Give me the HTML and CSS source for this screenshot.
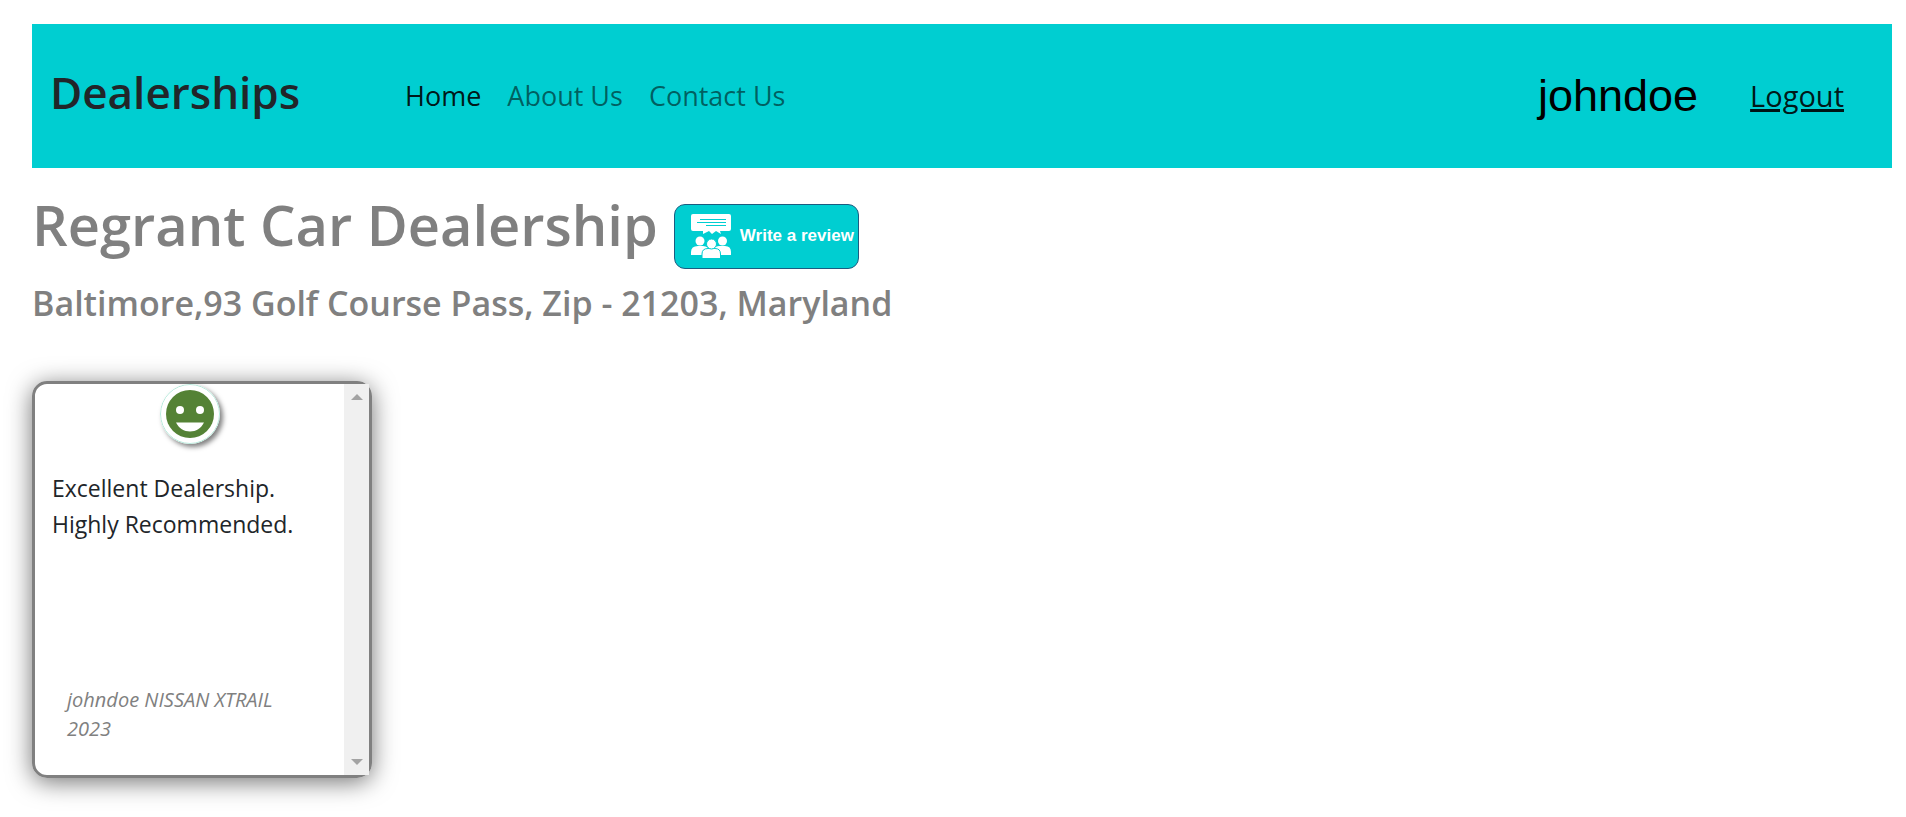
FILE: index.html
```html
<!DOCTYPE html>
<html lang="en">
<head>
<meta charset="utf-8">
<meta name="viewport" content="width=device-width, initial-scale=1">
<title>Dealerships</title>
<link rel="stylesheet" href="styles.css">
</head>
<body>
<header class="navbar">
  <h2 class="brand">Dealerships</h2>
  <nav class="menu">
    <a class="menu-link active" href="#">Home</a>
    <a class="menu-link" href="#">About Us</a>
    <a class="menu-link" href="#">Contact Us</a>
  </nav>
  <div class="account">
    <span class="username">johndoe</span>
    <a class="logout" href="#">Logout</a>
  </div>
</header>
<main class="dealer">
  <div class="title-row">
    <h1 class="title">Regrant Car Dealership</h1>
    <a class="review-button" href="#">
      <svg class="review-icon" viewBox="0 0 40 44" aria-hidden="true">
        <path fill="#fff" d="M2 0H38Q40 0 40 2V15Q40 17 38 17H29L30 20L25 17L21 20L18 17L12 20V17H2Q0 17 0 15V2Q0 0 2 0Z"/>
        <path stroke="#00ced1" stroke-width="1" d="M9 5.500H35M6 8.500H35M15 11.500H35"/>
        <g fill="#fff" stroke="#00ced1">
          <circle stroke="none" cx="9" cy="27" r="4.500"/>
          <circle stroke="none" cx="31.500" cy="27" r="4.500"/>
          <path stroke="none" d="M0 41V38Q0 32 7 32H12Q18 32 18 38V41ZM22 41V38Q22 32 28 32H34Q40 32 40 38V41Z"/>
          <path d="M11 45V40Q11 34.500 17 34.500H24Q29.500 34.500 29.500 40V45Z"/>
          <circle cx="20.500" cy="30" r="5"/>
        </g>
      </svg>
      <span>Write a review</span>
    </a>
  </div>
  <h4 class="address">Baltimore,93 Golf Course Pass, Zip - 21203, Maryland</h4>
  <section class="reviews">
    <article class="card">
      <div class="card-body">
        <svg class="smiley" viewBox="0 0 60 60" role="img" aria-label="Positive">
          <circle cx="30" cy="30" r="29.500" fill="#fff" stroke="#b5eadb"/>
          <circle cx="30" cy="30" r="24" fill="#548235"/>
          <circle cx="20" cy="26" r="4" fill="#fff"/>
          <circle cx="40" cy="26" r="4" fill="#fff"/>
          <path d="M16 38.500H44C41 44.500 36 47.500 30 47.500S19 44.500 16 38.500Z" fill="#fff"/>
        </svg>
        <p class="review-text">Excellent Dealership. Highly Recommended.</p>
        <p class="reviewer">johndoe NISSAN XTRAIL 2023</p>
      </div>
      <div class="scrollbar" aria-hidden="true">
        <svg class="arrow" viewBox="0 0 12 6"><path d="M0 6L6 0L12 6Z"/></svg>
        <svg class="arrow" viewBox="0 0 12 6"><path d="M0 0L6 6L12 0Z"/></svg>
      </div>
    </article>
  </section>
</main>
</body>
</html>
```
FILE: styles.css
```css
* { box-sizing: border-box; }
html { background: #fff; }
body {
  min-height: 100vh;
  margin: 0;
  padding: 24px 14px 24px 32px;
  color: #212529;
  font-family: "Open Sans", "Noto Sans", sans-serif;
}
h1, h2, h4, p { margin: 0; }
.navbar {
  display: flex;
  align-items: center;
  height: 144px;
  padding: 0 48px 0 18px;
  background: #00ced1;
}
.brand {
  width: 355px;
  padding-bottom: 8px;
  font-size: 44px;
  line-height: 56px;
  font-weight: 600;
}
.menu { display: flex; gap: 26px; }
.menu-link {
  color: rgba(0, 0, 0, 0.55);
  font-size: 27px;
  line-height: 44px;
  text-decoration: none;
}
.menu-link.active { color: rgba(0, 0, 0, 0.9); }
.account {
  display: flex;
  align-items: center;
  gap: 52px;
  margin-left: auto;
}
.username {
  color: #000;
  font-family: "Liberation Sans", Arial, sans-serif;
  font-size: 45px;
  line-height: 56px;
}
.logout {
  color: rgba(0, 0, 0, 0.9);
  font-size: 29px;
  line-height: 44px;
  text-decoration-thickness: 3px;
}
.title-row {
  display: flex;
  align-items: flex-start;
  gap: 16px;
  padding-top: 20px;
}
.title {
  color: gray;
  font-size: 56px;
  line-height: 72px;
  font-weight: 600;
}
.review-button {
  display: flex;
  align-items: center;
  gap: 9px;
  height: 65px;
  margin-top: 16px;
  padding: 0 4px 2px 16px;
  border: 1px solid #1c5c80;
  border-radius: 11px;
  background: #00ced1;
  color: #fff;
  font: bold 17px "Liberation Sans", Arial, sans-serif;
  text-decoration: none;
  white-space: nowrap;
}
.review-icon { width: 40px; height: 44px; fill: none; }
.address {
  color: gray;
  font-size: 34px;
  line-height: 44px;
  font-weight: 600;
  padding-top: 12px;
}
.reviews { padding-top: 56px; }
.card {
  display: flex;
  width: 340px;
  height: 397px;
  border: 3px solid gray;
  border-radius: 15px;
  box-shadow: 0 4px 24px rgba(0, 0, 0, 0.55);
}
.card-body {
  display: flex;
  flex: 1;
  flex-direction: column;
  align-items: flex-start;
  padding-bottom: 32px;
}
.smiley {
  align-self: center;
  width: 60px;
  height: 60px;
  border-radius: 50%;
  box-shadow: 3px 3px 5px rgba(0, 0, 0, 0.5);
}
.review-text {
  padding: 26px 40px 0 17px;
  font-size: 23px;
  line-height: 36px;
}
.reviewer {
  margin-top: auto;
  padding: 0 40px 0 32px;
  color: gray;
  font-size: 20px;
  line-height: 29px;
  font-style: italic;
}
.scrollbar {
  display: flex;
  flex-direction: column;
  align-items: center;
  justify-content: space-between;
  width: 25px;
  padding: 10px 0;
  background: #f0f0f0;
}
.arrow { width: 12px; height: 6px; fill: #a3a3a3; }
```
